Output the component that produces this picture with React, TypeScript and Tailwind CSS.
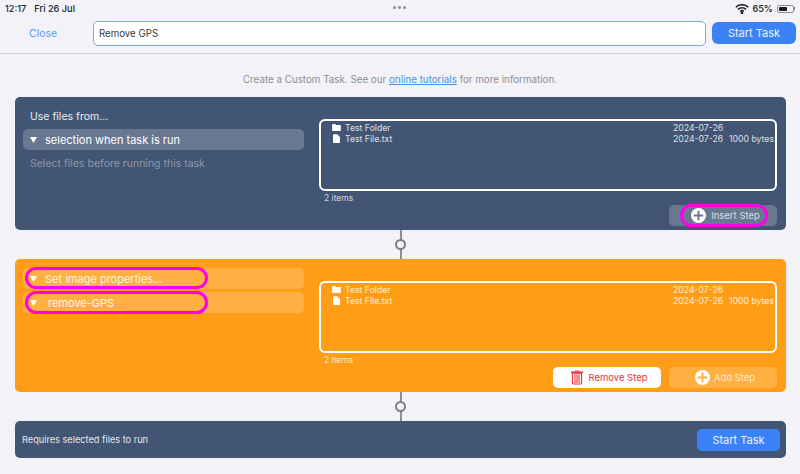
import React from "react";

const Folder = () => (
  <svg width="9" height="7" viewBox="0 0 10 8" className="block">
    <path d="M0 1.2C0 .5.5 0 1.2 0h2.3l1 1h4.3C9.500 1 10 1.500 10 2.200v4.600C10 7.500 9.500 8 8.800 8H1.200C.5 8 0 7.500 0 6.800z" fill="#fff" />
  </svg>
);
const FileIcon = () => (
  <svg width="7" height="9" viewBox="0 0 8 10" className="block">
    <path d="M1 0h3.800L8 3.200V9a1 1 0 0 1-1 1H1a1 1 0 0 1-1-1V1a1 1 0 0 1 1-1z" fill="#fff" />
  </svg>
);
const Tri = () => (
  <svg width="7" height="6" viewBox="0 0 7 6" className="block shrink-0">
    <path d="M0 0h7L3.500 6z" fill="#fff" />
  </svg>
);
const Plus = ({ color }: { color: string }) => (
  <svg width="15" height="15" viewBox="0 0 16 16" className="block shrink-0">
    <circle cx="8" cy="8" r="8" fill="#fff" />
    <path d="M8 3v10M3 8h10" stroke={color} strokeWidth="2" />
  </svg>
);
const Trash = () => (
  <svg width="12" height="15" viewBox="0 0 13 15" className="block shrink-0" fill="none" stroke="#ef2f3c">
    <path d="M0 1.800h13" strokeWidth="1.600" />
    <path d="M4 1.500 4.500.5h4L9 1.500" strokeWidth="1" />
    <path d="M1.500 3.500h10V13.500a1 1 0 0 1-1 1h-8a1 1 0 0 1-1-1z" strokeWidth="1.200" />
    <path d="M4.300 4.500v9M6.500 4.500v9M8.700 4.500v9" strokeWidth="1.200" />
  </svg>
);
const Wifi = () => (
  <svg width="14" height="10" viewBox="0 0 14 10" className="block" fill="none" stroke="#1c1c1e" strokeWidth="1.500">
    <path d="M.8 3.200a9 9 0 0 1 12.400 0" />
    <path d="M3 5.400a5.800 5.800 0 0 1 8 0" />
    <path d="M5.200 7.500a2.600 2.600 0 0 1 3.600 0" />
    <circle cx="7" cy="9" r=".6" fill="#1c1c1e" />
  </svg>
);

const Outline = ({ className }: { className: string }) => (
  <div className={"absolute rounded-full border-[3px] border-[#ff00e6] pointer-events-none " + className} />
);

const Connector = () => (
  <div className="relative h-[29px] flex justify-center">
    <div className="w-[2px] h-full bg-[#8e8e93]" />
    <div className="absolute top-[9px] left-[380px] w-[11px] h-[11px] rounded-full border-2 border-[#7d7d82] bg-[#f2f2f7]" />
  </div>
);

const FileList = () => (
  <div className="h-[72px] rounded-[6px] border-2 border-white pl-[11px] pr-[1px] pt-[1px] text-[8.700px] leading-[11px] text-white/80">
    <div className="flex items-center h-[11px]">
      <span className="w-[13px]"><Folder /></span>
      <span className="flex-1 pt-[1px]">Test Folder</span>
      <span className="w-[101px] pt-[1px]">2024-07-26</span>
    </div>
    <div className="flex items-center h-[11px]">
      <span className="w-[13px] pl-[1px]"><FileIcon /></span>
      <span className="flex-1 pt-[1px]">Test File.txt</span>
      <span className="w-[56px] pt-[1px]">2024-07-26</span>
      <span className="w-[45px] pt-[1px] whitespace-nowrap">1000 bytes</span>
    </div>
  </div>
);

const Pill = ({ children, bg }: { children: React.ReactNode; bg: string }) => (
  <div className={"h-[21px] rounded-[5px] flex items-center pl-[7px] text-[11px] text-white " + bg}>{children}</div>
);

export default function App() {
  return (
    <div className="relative w-[800px] h-[474px] overflow-hidden bg-[#f2f2f7] font-['Inter','Liberation_Sans',sans-serif]">
      {/* Status bar */}
      <div className="relative h-[15px] flex items-center justify-between pl-[5px] pr-[5px] pt-[2px] text-[9.200px] font-medium text-[#1c1c1e]">
        <div className="flex gap-[8px]"><span>12:17</span><span>Fri 26 Jul</span></div>
        <div className="absolute left-[393px] top-[6px] flex gap-[2px]">
          <span className="w-[3px] h-[3px] rounded-full bg-[#8e8e93]" />
          <span className="w-[3px] h-[3px] rounded-full bg-[#8e8e93]" />
          <span className="w-[3px] h-[3px] rounded-full bg-[#8e8e93]" />
        </div>
        <div className="flex items-center gap-[3px]">
          <Wifi />
          <span>65%</span>
          <div className="flex items-center ml-[1px]">
            <div className="w-[17px] h-[8px] rounded-[2px] border border-[#8e8e93] p-[1px]"><div className="h-full w-[65%] bg-[#1c1c1e] rounded-[1px]" /></div>
            <div className="w-[1px] h-[3px] bg-[#8e8e93]" />
          </div>
        </div>
      </div>
      {/* Toolbar */}
      <div className="h-[39px] border-b border-[#cfcfd3] flex items-start pt-[6px] pl-[29px] pr-[4px]">
        <span className="w-[64px] mt-[6px] text-[10.500px] leading-[14px] text-[#5e9bf7]">Close</span>
        <div className="w-[613px] h-[25px] rounded-[5px] border border-[#78a8f5] bg-white flex items-center pl-[5px] pt-[1px] text-[9.700px] text-[#3a3a3c]">Remove GPS</div>
        <div className="ml-[6px] w-[84px] h-[22px] mt-[1px] pt-[1px] rounded-[6px] bg-[#3b82f6] flex items-center justify-center text-[11px] text-white/90">Start Task</div>
      </div>
      {/* Intro */}
      <div className="h-[43px] pt-[19px] text-center text-[9.800px] leading-[13px] text-[#8e8e93]">
        Create a Custom Task. See our <span className="text-[#4f8fe8] underline">online tutorials</span> for more information.
      </div>

      <div className="ml-[15px] w-[771px]">
        {/* Card 1 */}
        <div className="h-[133px] rounded-[5px] bg-[#425574] flex pl-[8px] pr-[9px] gap-[15px]">
          <div className="w-[281px] shrink-0">
            <div className="h-[32px] pt-[13px] pl-[7px] text-[10.500px] leading-[13px] text-white/90">Use files from...</div>
            <Pill bg="bg-[#687891]"><Tri /><span className="ml-[8px] pt-[1px]">selection when task is run</span></Pill>
            <div className="pl-[7px] pt-[7px] text-[10.500px] leading-[13px] text-white/40">Select files before running this task</div>
          </div>
          <div className="flex-1 pt-[22px]">
            <FileList />
            <div className="pl-[5px] pt-[2px] h-[14px] text-[8.500px] leading-[11px] text-white/75">2 items</div>
            <div className="flex justify-end">
              <div className="w-[108px] h-[21px] pl-[5px] rounded-[5px] bg-[#687891] flex items-center justify-center gap-[5px] text-[9.500px] text-white/75"><Plus color="#687891" /><span className="pt-[1px]">Insert Step</span></div>
            </div>
          </div>
        </div>

        <Connector />

        {/* Card 2 */}
        <div className="h-[133px] rounded-[5px] bg-[#ff9d17] flex pl-[8px] pr-[9px] gap-[15px]">
          <div className="w-[281px] shrink-0 pt-[9px] flex flex-col gap-[3px]">
            <Pill bg="bg-[#ffb040]"><Tri /><span className="ml-[8px] pt-[1px] text-white/85">Set image properties...</span></Pill>
            <Pill bg="bg-[#ffb040]"><Tri /><span className="ml-[11px] pt-[1px] text-white/90">remove-GPS</span></Pill>
          </div>
          <div className="flex-1 pt-[22px]">
            <FileList />
            <div className="pl-[5px] pt-[2px] h-[14px] text-[8.500px] leading-[11px] text-white/75">2 items</div>
            <div className="flex justify-end gap-[8px]">
              <div className="w-[108px] h-[21px] pl-[5px] rounded-[5px] bg-white flex items-center justify-center gap-[5px] text-[9.500px] text-[#ef2f3c]"><Trash /><span className="pt-[1px]">Remove Step</span></div>
              <div className="w-[108px] h-[21px] pl-[4px] rounded-[5px] bg-[#ffb040] flex items-center justify-center gap-[4px] text-[9.500px] text-white/75"><Plus color="#ffb040" /><span className="pt-[1px]">Add Step</span></div>
            </div>
          </div>
        </div>

        <Connector />

        {/* Card 3 */}
        <div className="h-[37px] rounded-[5px] bg-[#425574] flex items-center justify-between pl-[7px] pr-[6px]">
          <span className="pt-[1px] text-[9.200px] text-white/85">Requires selected files to run</span>
          <div className="w-[83px] h-[22px] pt-[1px] rounded-[5px] bg-[#3b82f6] flex items-center justify-center text-[11px] text-white/90">Start Task</div>
        </div>
      </div>

      <Outline className="left-[680px] top-[204px] w-[88px] h-[23px]" />
      <Outline className="left-[25px] top-[267px] w-[183px] h-[22px]" />
      <Outline className="left-[25px] top-[291px] w-[183px] h-[23px]" />
    </div>
  );
}
